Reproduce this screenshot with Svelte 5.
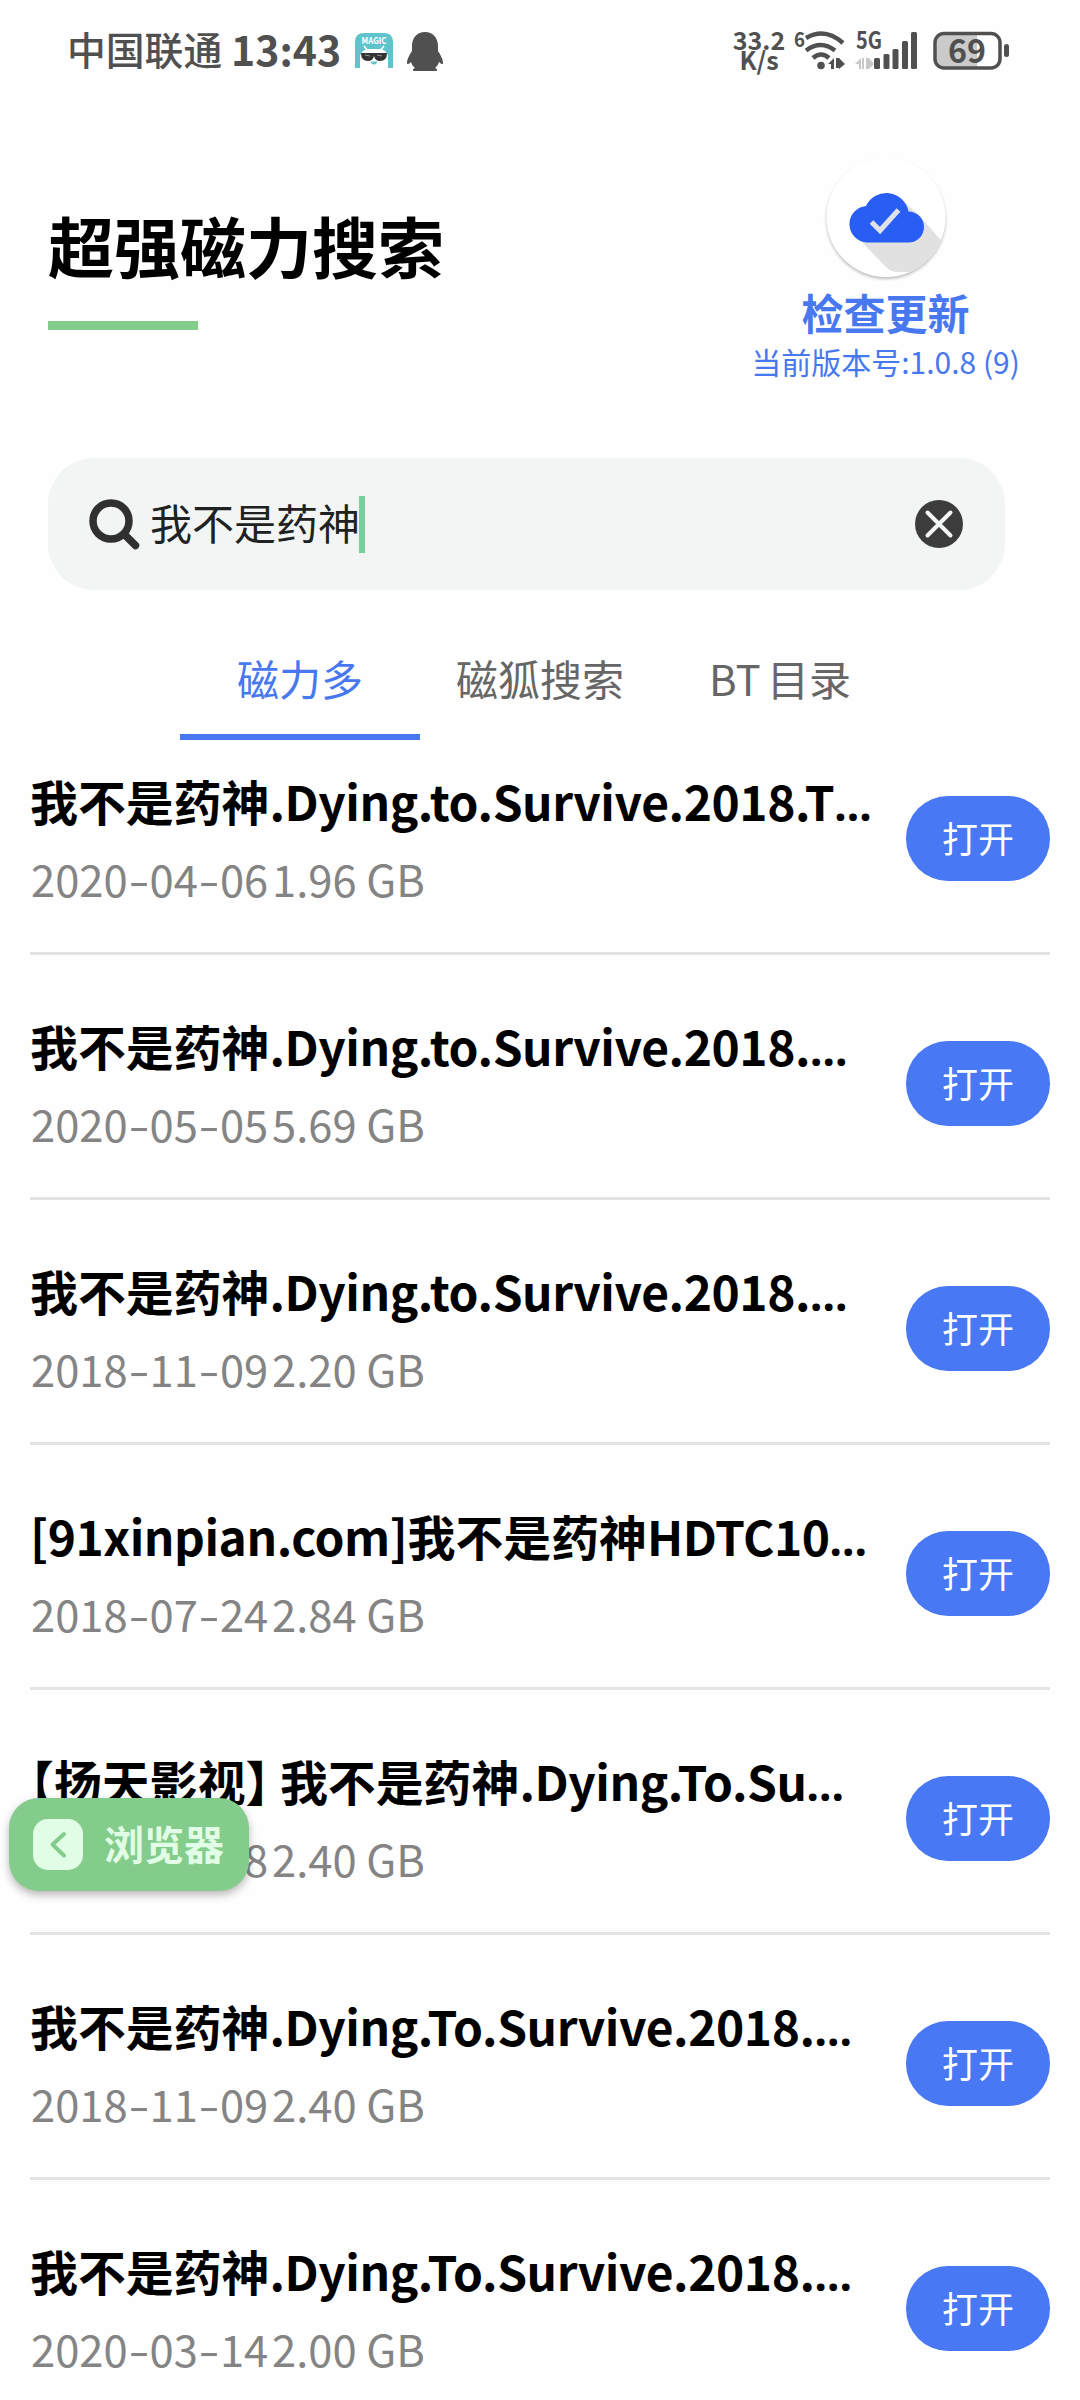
<script lang="ts">
    type Part = { text: string; kind: 'cjk' | 'latin' | 'bracket' };
    type Result = { title: string; date: string; size: string };

    let keyword = '我不是药神';
    let tabs = ['磁力多', '磁狐搜索', 'BT 目录'];
    let active = 0;

    let results: Result[] = [
        {title: '我不是药神.Dying.to.Survive.2018.T', date: '2020-04-06', size: '1.96 GB'},
        {title: '我不是药神.Dying.to.Survive.2018.', date: '2020-05-05', size: '5.69 GB'},
        {title: '我不是药神.Dying.to.Survive.2018.', date: '2018-11-09', size: '2.20 GB'},
        {title: '[91xinpian.com]我不是药神HDTC10', date: '2018-07-24', size: '2.84 GB'},
        {title: '【扬天影视】 我不是药神.Dying.To.Su', date: '2018-11-08', size: '2.40 GB'},
        {title: '我不是药神.Dying.To.Survive.2018.', date: '2018-11-09', size: '2.40 GB'},
        {title: '我不是药神.Dying.To.Survive.2018.', date: '2020-03-14', size: '2.00 GB'},
    ];

    // Chinese and Latin runs are spaced differently
    function split(title: string): Part[] {
        return (title.match(/[【】]|[\u4e00-\u9fff]+|[ -~]+/g) ?? []).map((text) => ({
            text,
            kind: /[【】]/.test(text) ? 'bracket' : text.charCodeAt(0) > 255 ? 'cjk' : 'latin',
        }));
    }
</script>

<div class="page">
    <div class="status">
        <span class="carrier">中国联通</span>
        <span class="clock">13:43</span>
        <svg class="magic" width="38" height="36" viewBox="0 0 38 36">
            <path d="M9 0h20q9 0 9 9v26h-6V22H6v13H0V9q0-9 9-9z" fill="#5fc3cb"/>
            <path d="M5 35V22h28v13z" fill="#fefefe"/>
            <path d="M5 23q2-7 9-7h10q7 0 9 7z" fill="#fff"/>
            <path d="M9 13l4 5M29 13l-4 5" stroke="#fff" stroke-width="1.6"/>
            <path d="M0 22h5q0 8 0 13H2q-2 0-2-3zM38 22h-5v13h3q2 0 2-3z" fill="#5fc3cb"/>
            <path d="M6 20h26q0 8-7 8-5 0-6-5-1 5-6 5-7 0-7-8z" fill="#333"/>
            <path d="M10 22l5 1M22 22l5 1" stroke="#999"/>
            <path d="M16 28.500h6q0 3-3 3t-3-3z" fill="#5fc3cb"/>
            <text x="19" y="11" text-anchor="middle" textLength="25" lengthAdjust="spacingAndGlyphs">MAGIC</text>
        </svg>
        <svg class="penguin" width="36" height="40" viewBox="0 0 36 40">
            <path d="M18 0c8 0 13 6 13 14v5c2 3 5 8 5 12 0 2-2 1-4-1-1 3-2 4-4 6 3 1 3 3 0 3H8c-3 0-3-2 0-3-2-2-3-3-4-6-2 2-4 3-4 1 0-4 3-9 5-12v-5C5 6 10 0 18 0z" fill="#505050"/>
        </svg>
        <div class="speed"><span>33.2</span><span>K/s</span></div>
        <svg class="wifi" width="54" height="42" viewBox="0 0 54 42">
            <text x="0" y="17" font-size="21" textLength="11" lengthAdjust="spacingAndGlyphs">6</text>
            <g fill="none" stroke="#505050" stroke-width="4.500">
                <path d="M12 8q19-11 37 5"/>
                <path d="M12 20.500q15-11 29 0"/>
                <path d="M19 28q8-7 16 0"/>
            </g>
            <circle cx="27" cy="35.500" r="3.800" fill="#505050"/>
            <path d="M34 34l6-6v11h-3v-5zM42 28h3v10h-3zM45 28l6 6-6 5z" fill="#505050"/>
        </svg>
        <svg class="signal" width="64" height="42" viewBox="0 0 64 42">
            <text x="1" y="19" font-size="24" textLength="26" lengthAdjust="spacingAndGlyphs">5G</text>
            <path d="M0 34l6-6v11H4v-5zM7 28h2v11H7zM11 28h3v11h-3zM14 28l5 6-5 5z" fill="#c8c8c8"/>
            <g fill="#505050">
                <rect x="19" y="28" width="6" height="11" rx="1.500"/>
                <rect x="28.500" y="24" width="6" height="15" rx="1.500"/>
                <rect x="37.500" y="19" width="6" height="20" rx="1.500"/>
                <rect x="47" y="11" width="6" height="28" rx="1.500"/>
                <rect x="56" y="2" width="6" height="37" rx="1.500"/>
            </g>
        </svg>
        <svg class="battery" width="78" height="40" viewBox="0 0 78 40">
            <path d="M12 3h32v34H12q-9 0-9-9V12q0-9 9-9z" fill="#cacaca"/>
            <rect x="2" y="2.500" width="65" height="34.500" rx="9" fill="none" stroke="#505050" stroke-width="3.500"/>
            <rect x="71" y="13" width="5" height="13" rx="2.500" fill="#505050"/>
            <text x="34" y="31.500" text-anchor="middle" font-size="33" textLength="38" lengthAdjust="spacingAndGlyphs">69</text>
        </svg>
    </div>

    <header>
        <div class="brand">
            <h1>超强磁力搜索</h1>
            <div class="underline"></div>
        </div>
        <div class="update">
            <svg width="130" height="130" viewBox="0 0 130 130">
                <defs>
                    <clipPath id="disc"><circle cx="65" cy="64.500" r="59.500"/></clipPath>
                </defs>
                <circle class="disc" cx="65" cy="64.500" r="59.500"/>
                <g clip-path="url(#disc)">
                    <path d="M38 86l26 27q5 6 13 6h30l20-24-24-27-18-18z" fill="#e1e1e1"/>
                </g>
                <path d="M46 89.500a18.300 18.300 0 0 1-1-36.500 22.500 22.500 0 0 1 42.500 5.500 15.500 15.500 0 0 1 0 31z" fill="#295ef5"/>
                <path d="M50.500 69l8.500 8.500L77.500 57" fill="none" stroke="#dfe2e8" stroke-width="5"/>
            </svg>
            <strong>检查更新</strong>
            <span class="version">当前版本号:1.0.8 (9)</span>
        </div>
    </header>

    <div class="search">
        <svg width="54" height="54" viewBox="0 0 54 54">
            <circle cx="24" cy="24" r="18" fill="none" stroke="#303030" stroke-width="7.500"/>
            <path d="M38 38l10.500 10.500" stroke="#303030" stroke-width="7.500" stroke-linecap="round"/>
        </svg>
        <span class="keyword">{keyword}</span>
        <span class="caret"></span>
        <svg class="clear" width="48" height="48" viewBox="0 0 48 48">
            <circle cx="24" cy="24" r="24" fill="#3c3c3c"/>
            <path d="M12.500 12.500l23 23M35.500 12.500l-23 23" stroke="#f2f5f4" stroke-width="4" stroke-linecap="round"/>
        </svg>
    </div>

    <nav>
        {#each tabs as tab, i}
            <div class="tab" class:active={i === active}>{tab}</div>
        {/each}
    </nav>

    <div class="results">
        {#each results as result}
            <div class="result">
                <div class="info">
                    <div class="title">
                        {#each split(result.title) as part}<span class={part.kind}>{part.text}</span>{/each}<span class="dots">…</span>
                    </div>
                    <div class="meta">
                        <span class="date">{#each result.date.split('-') as n, i}{#if i > 0}<span class="dash">-</span>{/if}{n}{/each}</span>
                        <span class="size">{result.size}</span>
                    </div>
                </div>
                <button>打开</button>
            </div>
        {/each}
    </div>

    <div class="back">
        <svg width="50" height="51" viewBox="0 0 50 51">
            <rect width="50" height="51" rx="15" fill="#e1fde6"/>
            <path d="M31 15L19.500 25.500 31 36.500" fill="none" stroke="#84cc8c" stroke-width="4" stroke-linecap="round" stroke-linejoin="round"/>
        </svg>
        <span>浏览器</span>
    </div>
</div>

<style>
    :global(body) {
        background: #fefefe;
    }

    .page {
        position: relative;
        width: 1080px;
        height: 2400px;
        overflow: hidden;
        background: #fefefe;
        font-family: "Noto Sans CJK SC", sans-serif;
        white-space: nowrap;
    }

    .status {
        display: flex;
        align-items: flex-start;
        height: 100px;
        padding: 0 67px;
        box-sizing: border-box;
        color: #505050;
        font-weight: 500;
    }

    .status svg {
        flex: none;
        overflow: visible;
        fill: #505050;
        font-weight: 700;
    }

    .carrier {
        width: 164px;
        margin-top: 18px;
        font-size: 38.8px;
        line-height: 60px;
    }

    .clock {
        width: 124px;
        margin-top: 18px;
        font-size: 41px;
        font-weight: 700;
        line-height: 60px;
    }

    .magic {
        margin-top: 33px;
    }

    .magic text {
        fill: white;
        font-size: 9px;
    }

    .penguin {
        margin: 32px 0 0 14px;
    }

    .speed {
        display: flex;
        flex-direction: column;
        align-items: center;
        width: 54px;
        margin: 30px 0 0 289px;
        font-size: 25px;
        font-weight: 700;
        line-height: 19.5px;
    }

    .wifi {
        margin: 30px 0 0 8px;
    }

    .signal {
        margin: 30px 0 0 7px;
    }

    .battery {
        margin: 31px 0 0 14px;
    }

    header {
        display: flex;
        justify-content: space-between;
        height: 358px;
        padding: 0 60px 0 48px;
    }

    h1 {
        margin: 98px 0 0;
        font-size: 66px;
        font-weight: 700;
        line-height: 92px;
        color: black;
    }

    .underline {
        width: 150px;
        height: 9px;
        margin-top: 31px;
        background: #84cc8c;
    }

    .update {
        display: flex;
        flex-direction: column;
        align-items: center;
        width: 269px;
        padding-top: 53px;
        color: #4878f0;
    }

    .disc {
        fill: white;
        filter: drop-shadow(0 2px 1.5px rgba(0, 0, 0, 0.25));
    }

    .update strong {
        margin-top: 2px;
        font-size: 42px;
        line-height: 54px;
    }

    .version {
        font-size: 30px;
        line-height: 44px;
    }

    .search {
        display: flex;
        align-items: center;
        box-sizing: border-box;
        width: 957px;
        height: 132px;
        margin-left: 48px;
        padding: 0 42px 0 39px;
        border-radius: 46px;
        background: #f2f5f4;
    }

    .keyword {
        margin: 0 -1px 4px 9px;
        font-size: 42px;
        line-height: 60px;
        color: #202222;
    }

    .caret {
        width: 6px;
        height: 57px;
        background: #76d09a;
    }

    .clear {
        margin-left: auto;
    }

    nav {
        display: flex;
        height: 150px;
        padding-left: 180px;
    }

    .tab {
        box-sizing: border-box;
        width: 240px;
        padding-top: 58px;
        border-bottom: 6px solid transparent;
        font-size: 42px;
        line-height: 60px;
        text-align: center;
        word-spacing: -3px;
        color: #666;
    }

    .tab.active {
        border-color: #4878f0;
        color: #4878f0;
    }

    .results {
        display: flex;
        flex-direction: column;
        gap: 30px;
        padding: 0 30px;
    }

    .result {
        display: flex;
        justify-content: space-between;
        flex: none;
        box-sizing: border-box;
        height: 215px;
        border-bottom: 3px solid #e4e4e4;
    }

    .title {
        margin-top: 30px;
        font-size: 47.9px;
        font-weight: 700;
        line-height: 60px;
        color: black;
    }

    .title .latin {
        white-space: pre;
        letter-spacing: -0.45px;
    }

    .title .bracket {
        font-feature-settings: "halt";
    }

    .dots {
        font-family: "Noto Sans", sans-serif;
        font-size: 44px;
    }

    .meta {
        display: flex;
        margin-top: 15px;
        padding-left: 1px;
        font-size: 43.5px;
        line-height: 60px;
        color: #848484;
    }

    .date {
        width: 241px;
    }

    .dash {
        display: inline-block;
        width: 22px;
        text-align: center;
        transform: scaleX(1.4);
    }

    button {
        width: 144px;
        height: 85px;
        margin: 56px 0 0;
        padding: 0 0 3px;
        border: none;
        border-radius: 42px;
        background: #4878f4;
        color: white;
        font-family: inherit;
        font-size: 36px;
    }

    .back {
        position: absolute;
        left: 9px;
        top: 1798px;
        display: flex;
        align-items: center;
        box-sizing: border-box;
        width: 240px;
        height: 93px;
        padding-left: 24px;
        border-radius: 30px;
        background: #84cc8c;
        box-shadow: 0 4px 8px rgba(0, 0, 0, 0.28);
        color: #e1fde6;
        font-size: 40px;
        font-weight: 700;
        line-height: 60px;
    }

    .back span {
        margin: 0 0 3px 21px;
    }
</style>
